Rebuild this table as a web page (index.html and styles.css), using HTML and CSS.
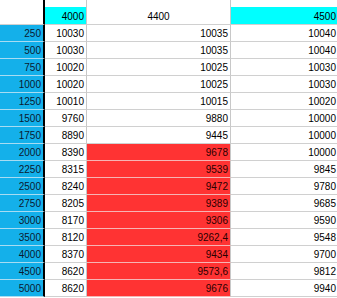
FILE: index.html
```html
<!DOCTYPE html>
<html>
<head>
<meta charset="utf-8">
<link rel="stylesheet" href="styles.css">
</head>
<body>
<div class="sheet">
  <div class="c a top"></div><div class="c top"></div><div class="c top"></div><div class="c top"></div>

  <div class="c a hd"></div><div class="c hd cy">4000</div><div class="c hd ctr">4400</div><div class="c hd cy">4500</div>

  <div class="c a lbl">250</div><div class="c">10030</div><div class="c">10035</div><div class="c">10040</div>
  <div class="c a lbl">500</div><div class="c">10030</div><div class="c">10035</div><div class="c">10040</div>
  <div class="c a lbl">750</div><div class="c">10020</div><div class="c">10025</div><div class="c">10030</div>
  <div class="c a lbl">1000</div><div class="c">10020</div><div class="c">10025</div><div class="c">10030</div>
  <div class="c a lbl">1250</div><div class="c">10010</div><div class="c">10015</div><div class="c">10020</div>
  <div class="c a lbl">1500</div><div class="c">9760</div><div class="c">9880</div><div class="c">10000</div>
  <div class="c a lbl">1750</div><div class="c">8890</div><div class="c">9445</div><div class="c">10000</div>
  <div class="c a lbl">2000</div><div class="c">8390</div><div class="c red">9678</div><div class="c">10000</div>
  <div class="c a lbl">2250</div><div class="c">8315</div><div class="c red">9539</div><div class="c">9845</div>
  <div class="c a lbl">2500</div><div class="c">8240</div><div class="c red">9472</div><div class="c">9780</div>
  <div class="c a lbl">2750</div><div class="c">8205</div><div class="c red">9389</div><div class="c">9685</div>
  <div class="c a lbl">3000</div><div class="c">8170</div><div class="c red">9306</div><div class="c">9590</div>
  <div class="c a lbl">3500</div><div class="c">8120</div><div class="c red">9262,4</div><div class="c">9548</div>
  <div class="c a lbl">4000</div><div class="c">8370</div><div class="c red">9434</div><div class="c">9700</div>
  <div class="c a lbl">4500</div><div class="c">8620</div><div class="c red">9573,6</div><div class="c">9812</div>
  <div class="c a lbl">5000</div><div class="c">8620</div><div class="c red">9676</div><div class="c">9940</div>
</div>
</body>
</html>
```
FILE: styles.css
```css
html, body {
  margin: 0;
  padding: 0;
  background: #ffffff;
  overflow: hidden;
}
.sheet {
  display: grid;
  grid-template-columns: 45px 42px 144px 108px;
  font-family: "Liberation Sans", Arial, sans-serif;
  font-size: 10px;
  color: #000;
}
.c {
  box-sizing: border-box;
  height: 17px;
  padding: 1px 2px 0 0;
  line-height: 15px;
  text-align: right;
  border-right: 1px solid #c8c8c8;
  border-bottom: 1px solid #d0d0d0;
  white-space: nowrap;
  overflow: hidden;
}
.c.a {
  border-right: 2px solid #000;
}
.c.lbl {
  background: #14b0ea;
  border-bottom-color: #a8dcf2;
  color: #0a1a30;
}
.c.top {
  height: 7px;
  border-bottom: none;
  padding: 0;
}
.c.hd {
  height: 18px;
  padding-top: 2px;
}
.c.cy {
  background: #00ffff;
}
.c.ctr {
  text-align: center;
  padding-right: 0;
}
.c.red {
  background: #ff3333;
  border-bottom-color: #f6b4b4;
  color: #2a0000;
}
```
